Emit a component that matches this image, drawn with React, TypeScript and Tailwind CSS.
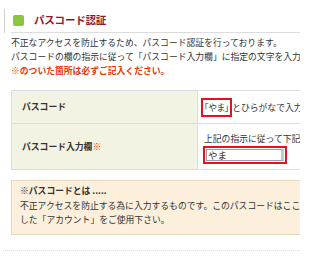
export default function App() {
  return (
    <div
      className="relative h-[277px] w-[300px] overflow-hidden bg-white text-[#333]"
      style={{ fontFamily: '"Noto Sans CJK JP", "Noto Sans", sans-serif' }}
    >
      {/* header */}
      <div className="ml-[4px] mt-[9px] border-l border-[#cfcfcf] pl-[6px]">
        <div className="flex h-[24px] items-center gap-[10px] border-b border-[#dcdcdc] pl-[2px]">
          <span className="block h-[11px] w-[11px] rounded-[2px] bg-[#8cc63f]" />
          <h2 className="text-[10.5px] font-bold leading-none tracking-[-0.2px] text-[#8b1c2c]">
            パスコード認証
          </h2>
        </div>
      </div>

      {/* intro */}
      <div className="mt-[3px] whitespace-nowrap pl-[11px] text-[8.8px] leading-[14px]">
        <p>不正なアクセスを防止するため、パスコード認証を行っております。</p>
        <p>パスコードの欄の指示に従って「パスコード入力欄」に指定の文字を入力して下さい。</p>
        <p className="font-bold text-[#e8380d]">※のついた箇所は必ずご記入ください。</p>
      </div>

      {/* table */}
      <table className="ml-[11px] mt-[12px] w-[330px] table-fixed border-collapse text-[8.8px]">
        <colgroup>
          <col className="w-[186px]" />
          <col />
        </colgroup>
        <tbody>
          <tr className="h-[33px]">
            <th className="border border-[#dcdce4] bg-[#f3f3e3] pl-[10px] text-left font-bold">
              パスコード
            </th>
            <td className="overflow-hidden whitespace-nowrap border border-[#dcdce4] pl-[3px]">
              <span className="inline-block border-2 border-[#e0141e] px-[1px] leading-[15px] [font-feature-settings:'palt']">
                「やま」
              </span>
              とひらがなで入力して下さい。
            </td>
          </tr>
          <tr className="h-[46px]">
            <th className="border border-[#dcdce4] bg-[#f3f3e3] pl-[10px] text-left font-bold">
              パスコード入力欄<span className="text-[#e8380d]">※</span>
            </th>
            <td className="overflow-hidden whitespace-nowrap border border-[#dcdce4] pl-[5px] align-top">
              <p className="mt-[9px] pl-[1px] leading-[12px]">上記の指示に従って下記に入力して下さい。</p>
              <div className="mt-[1px] inline-block border-2 border-[#e0141e] p-[1px]">
                <input
                  defaultValue="やま"
                  className="block h-[12px] w-[78px] border border-[#a0a0a0] border-r-[3px] border-r-[#c8c8c8] bg-white px-[1px] text-[9.5px] leading-[10px] outline-none"
                />
              </div>
            </td>
          </tr>
        </tbody>
      </table>

      {/* note */}
      <div className="ml-[11px] mt-[10px] h-[55px] w-[300px] whitespace-nowrap border border-[#e6d6be] bg-[#fcf0dc] pl-[8px] pt-[3px] text-[8.8px] leading-[14.5px]">
        <p className="font-bold">※パスコードとは .....</p>
        <p>不正アクセスを防止する為に入力するものです。このパスコードはここで登録</p>
        <p>した「アカウント」をご使用下さい。</p>
      </div>

      <div className="ml-[3px] mt-[15px] border-t border-dotted border-[#d8d8d8]" />
    </div>
  );
}
